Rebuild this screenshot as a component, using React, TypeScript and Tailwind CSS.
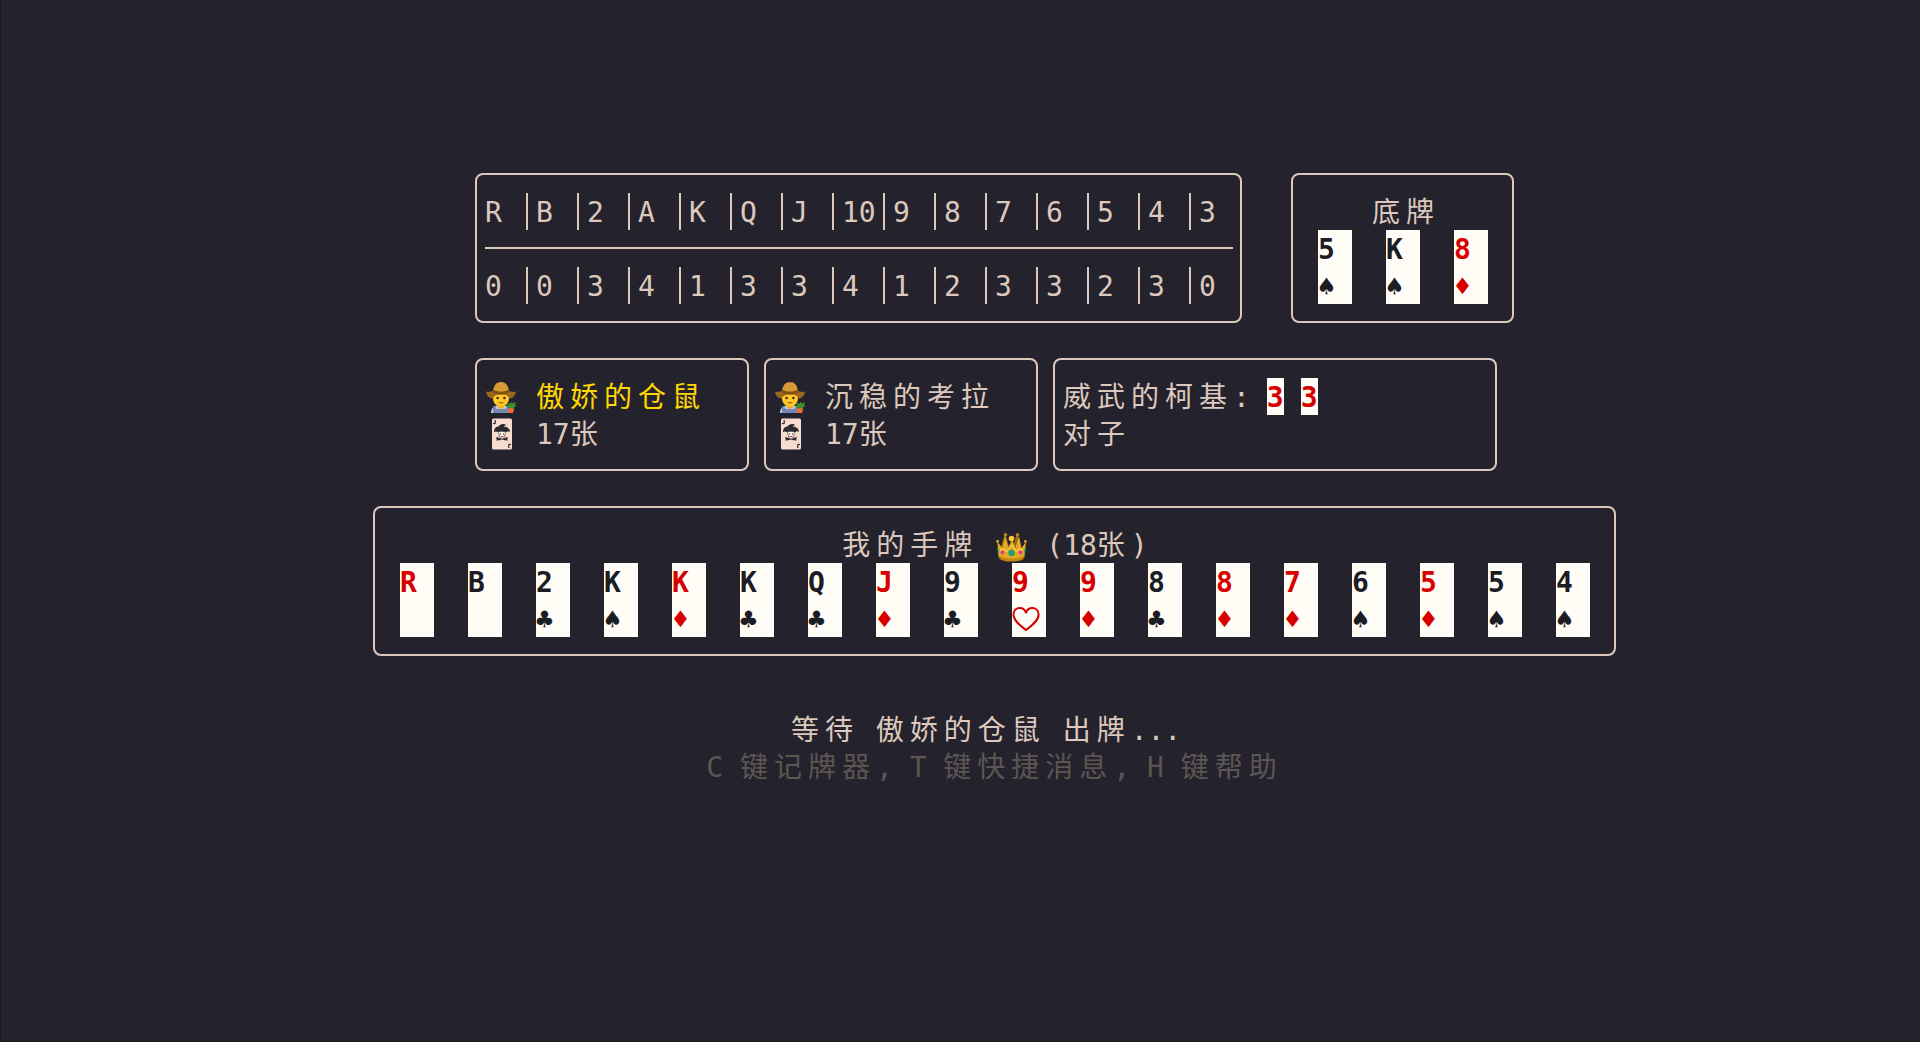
import React from 'react';

type Suit = '♠' | '♣' | '♦' | '♥' | '';
type CardData = { rank: string; suit: Suit; red?: boolean };

const counts = [
  { rank: 'R', left: 0 },
  { rank: 'B', left: 0 },
  { rank: '2', left: 3 },
  { rank: 'A', left: 4 },
  { rank: 'K', left: 1 },
  { rank: 'Q', left: 3 },
  { rank: 'J', left: 3 },
  { rank: '10', left: 4 },
  { rank: '9', left: 1 },
  { rank: '8', left: 2 },
  { rank: '7', left: 3 },
  { rank: '6', left: 3 },
  { rank: '5', left: 2 },
  { rank: '4', left: 3 },
  { rank: '3', left: 0 },
];

const bottomCards: CardData[] = [
  { rank: '5', suit: '♠' },
  { rank: 'K', suit: '♠' },
  { rank: '8', suit: '♦', red: true },
];

const hand: CardData[] = [
  { rank: 'R', suit: '', red: true },
  { rank: 'B', suit: '' },
  { rank: '2', suit: '♣' },
  { rank: 'K', suit: '♠' },
  { rank: 'K', suit: '♦', red: true },
  { rank: 'K', suit: '♣' },
  { rank: 'Q', suit: '♣' },
  { rank: 'J', suit: '♦', red: true },
  { rank: '9', suit: '♣' },
  { rank: '9', suit: '♥', red: true },
  { rank: '9', suit: '♦', red: true },
  { rank: '8', suit: '♣' },
  { rank: '8', suit: '♦', red: true },
  { rank: '7', suit: '♦', red: true },
  { rank: '6', suit: '♠' },
  { rank: '5', suit: '♦', red: true },
  { rank: '5', suit: '♠' },
  { rank: '4', suit: '♠' },
];

const isWide = (ch: string) => /[\u4e00-\u9fff]/.test(ch);

// Han characters take two terminal columns, everything else takes one
const Line: React.FC<{ text: string }> = ({ text }) => (
  <span className="whitespace-pre">
    {text.split(/([\u4e00-\u9fff])/).map((part, i) =>
      isWide(part) ? (
        <span key={i} className="inline-block w-[34px]">{part}</span>
      ) : (
        part
      )
    )}
  </span>
);

const Box: React.FC<{ className?: string; children: React.ReactNode }> = ({ className = '', children }) => (
  <section className={`rounded-lg border-2 border-[#dcc8bc] pt-[18px] pb-[17px] ${className}`}>{children}</section>
);

const HeartIcon: React.FC = () => (
  <svg viewBox="0 0 34 37" className="h-[37px] w-[34px]" role="img" aria-label="♥">
    <path
      d="M14 30C9 26 1.500 21 1.500 14.500C1.500 10.500 4.300 8 7.600 8C10.600 8 13 9.800 14 12.600C15 9.800 17.400 8 20.400 8C23.800 8 26.600 10.500 26.600 14.500C26.600 21 19 26 14 30Z"
      fill="none"
      stroke="currentColor"
      strokeWidth="2"
      strokeLinejoin="round"
    />
  </svg>
);

const Card: React.FC<{ card: CardData }> = ({ card }) => (
  <li className={`flex h-[74px] w-[34px] flex-col bg-[#fffdf5] ${card.red ? 'text-[#d70000]' : 'text-[#1c1c24]'}`}>
    <span className="h-[37px] font-bold">{card.rank}</span>
    <span className="h-[37px]">{card.suit === '♥' ? <HeartIcon /> : card.suit}</span>
  </li>
);

const FarmerIcon: React.FC = () => (
  <svg viewBox="0 0 32 32" className="h-8 w-8" role="img" aria-label="农民">
    <path d="M6 32c0-5 3-7 7-7.500h6c4 .5 7 2.500 7 7.500z" fill="#c3c9d6" />
    <path d="M10 25l1.500 3h9l1.500-3 2 .8V32H8v-6.200z" fill="#7388b4" />
    <path d="M13 22h6v4.500l-3 1.500-3-1.500z" fill="#f2a91e" />
    <path d="M8 12h16v5c0 5-3.500 8.500-8 8.500S8 22 8 17z" fill="#ffc928" />
    <path d="M8 12h16v3l-2.500-1.500h-11L8 16z" fill="#6b3f1d" />
    <circle cx="12.600" cy="17" r="1.300" fill="#3f2412" />
    <circle cx="19.400" cy="17" r="1.300" fill="#3f2412" />
    <path d="M14 21.800h4" stroke="#9b4a16" strokeWidth="1.100" fill="none" strokeLinecap="round" />
    <path d="M1 10.500c2 .8 5 .8 8-1.200h14c3 2 6 2 8 1.200-.5 4-3 6.800-6.500 7-1.500-3-4-4.500-8.500-4.500S9 14.500 7.500 17.500C4 17.300 1.500 14.500 1 10.500z" fill="#9a651c" />
    <path d="M8 11C8.500 4.500 11 2.500 13 1.500c2-.8 4-.8 6 0 2 1 4.500 3 5 9.500-4 2.300-12 2.300-16 0z" fill="#d99a35" />
    <path d="M8.200 8.800c4 2.400 11.600 2.400 15.600 0l.3 2.700c-4 2.300-12.200 2.300-16.200 0z" fill="#80500f" />
    <path d="M22.500 28l2-1.500 3.500.5 1 1.500-1 3.500h-4.500z" fill="#f06a35" />
    <path d="M22 25l2-3.500 1 1.500 2-2.500.5 2L31 21l-1 3 1.500 1-2.500 1 .5 3-2.500-2-4 .5z" fill="#3f8f2c" />
  </svg>
);

const JokerIcon: React.FC = () => (
  <svg viewBox="0 0 32 32" className="h-8 w-8" role="img" aria-label="牌数">
    <rect x="7" y=".5" width="20" height="31" rx="1.500" fill="#f6ddd0" />
    <path d="M10.200 2v3c0 1-1.700 1-1.700 0M23.800 30v-3c0-1 1.700-1 1.700 0" stroke="#27272b" strokeWidth="1.200" fill="none" />
    <path d="M13.500 13.500h7l-1 5.500-2.500 2-2.500-2z" fill="#fff4ec" stroke="#56504e" strokeWidth=".7" />
    <path d="M9 14.500c-.2-4 2-6 4.500-6C15 6 19 5 21.500 7.500c-1.500-.3-2.500.3-2.500 1.200 2.500-.2 6 1.300 6 5.300-1.200-1.200-2.500-1.200-3.500 .3-2.500-1.200-6.500-1.300-8.500 0-1.500-1-3-1-4 .2z" fill="#2b2b2f" />
    <path d="M15 16h1M18 16h1" stroke="#2b2b2f" strokeWidth="1.200" />
    <path d="M15 18h4l-2 1.600z" fill="#dd3f4c" />
    <path d="M11 19l3 .8 3 1.400 3-1.400 3-.8-.8 2.200 .8 1.300-3.500-.2L17 21.600l-2.500.7-3.500.2.8-1.300z" fill="#2b2b2f" />
  </svg>
);

const CrownIcon: React.FC = () => (
  <svg viewBox="0 0 32 32" className="mt-[5px] h-8 w-8" role="img" aria-label="地主">
    <path d="M10 2l4 13 2-2 2 2 4-13 4 14-2 6H8l-2-6z" fill="#9b6a12" />
    <path d="M2.500 11l5 6 2.500-12 3.500 12L17 8l3.500 9L24 5l2.500 12L31 11l-1.500 15c-5 4-21 4-26 0z" fill="#e3a924" />
    <path d="M4 25c6 3.400 19 3.400 25 0l-.5 3c-5 3.400-19 3.400-24 0z" fill="#c5860f" />
    <path d="M5 19l4-1 2.500 3 5-7 5 7 2.500-3 4 1" stroke="#ffd85a" strokeWidth="1" fill="none" />
    <circle cx="10.500" cy="3.800" r="1.800" fill="#b9851f" />
    <circle cx="22.500" cy="3.800" r="1.800" fill="#b9851f" />
    <circle cx="16.500" cy="7.500" r="2.800" fill="#ffca3a" />
    <circle cx="2.600" cy="10.500" r="1.400" fill="#e3a924" />
    <circle cx="30.400" cy="10.500" r="1.400" fill="#e3a924" />
    <circle cx="16.500" cy="22" r="3.200" fill="#1f9f69" />
    <circle cx="7.500" cy="21.500" r="1.900" fill="#dc3aa8" />
    <circle cx="25.500" cy="21.500" r="1.900" fill="#dc3aa8" />
    <path d="M2.300 16.500l1.700 2.500-.6 4-.8-1zM30.700 16.500l-1.700 2.500 .6 4 .8-1z" fill="#1f9f69" />
  </svg>
);

const Player: React.FC<{ name: string; cards: number; active?: boolean }> = ({ name, cards, active }) => (
  <Box className="w-[274px] pl-2">
    <div className="flex h-[37px] gap-[17px]">
      <span className="flex w-[34px] items-center"><FarmerIcon /></span>
      <h2 className={active ? 'text-[#ffd700]' : ''}><Line text={name} /></h2>
    </div>
    <div className="flex h-[37px] gap-[17px]">
      <span className="flex w-[34px] items-center"><JokerIcon /></span>
      <p><Line text={`${cards}张`} /></p>
    </div>
  </Box>
);

const CountTable: React.FC = () => (
  <table className="border-separate border-spacing-0 text-left">
    <thead>
      <tr>
        {counts.map(({ rank }, i) => (
          <th key={rank} scope="col" className="border-b-2 border-[#dcc8bc] p-0 pb-[17px] font-normal">
            <div className={i === 0 ? 'h-[37px] w-[41px]' : i === 14 ? 'h-[37px] w-11 border-l-2 border-[#dcc8bc] pl-2' : 'h-[37px] w-[51px] border-l-2 border-[#dcc8bc] pl-2'}>{rank}</div>
          </th>
        ))}
      </tr>
    </thead>
    <tbody>
      <tr>
        {counts.map(({ rank, left }, i) => (
          <td key={rank} className="p-0 pt-[18px]">
            <div className={i === 0 ? 'h-[37px]' : 'h-[37px] border-l-2 border-[#dcc8bc] pl-2'}>{left}</div>
          </td>
        ))}
      </tr>
    </tbody>
  </table>
);

const App: React.FC = () => {
  return (
    <main className="flex min-h-screen flex-col items-center border-b border-l border-[#191920] bg-[#24232d] pt-[173px] pl-[68px] font-['DejaVu_Sans_Mono','Noto_Sans_CJK_SC',monospace] text-[28px] leading-[39px] text-[#dcc8bc]">
      <div className="flex flex-col gap-[35px]">
        <div className="flex gap-[49px]">
          <Box className="pr-[7px] pl-2">
            <CountTable />
          </Box>
          <Box className="pr-6 pl-[25px]">
            <h2 className="h-[37px] text-center"><Line text="底牌" /></h2>
            <ul className="flex gap-[34px]">
              {bottomCards.map((card, i) => <Card key={i} card={card} />)}
            </ul>
          </Box>
        </div>
        <div className="flex gap-[15px]">
          <Player name="傲娇的仓鼠" cards={17} active />
          <Player name="沉稳的考拉" cards={17} />
          <Box className="w-[444px] pl-2">
            <div className="flex h-[37px] gap-[17px]">
              <h2><Line text="威武的柯基:" /></h2>
              <span className="w-[17px] bg-[#fffdf5] font-bold text-[#d70000]">3</span>
              <span className="w-[17px] bg-[#fffdf5] font-bold text-[#d70000]">3</span>
            </div>
            <p className="h-[37px]"><Line text="对子" /></p>
          </Box>
        </div>
      </div>
      <Box className="mt-[35px] pr-6 pl-[25px]">
        <h2 className="flex h-[37px] justify-center gap-[17px]">
          <Line text="我的手牌" />
          <span className="w-[34px]"><CrownIcon /></span>
          <Line text="(18张)" />
        </h2>
        <ul className="flex gap-[34px]">
          {hand.map((card, i) => <Card key={i} card={card} />)}
        </ul>
      </Box>
      <p className="mt-[55px] h-[37px]"><Line text="等待 傲娇的仓鼠 出牌... " /></p>
      <p className="h-[37px] text-[#5d5552]"><Line text="C 键记牌器, T 键快捷消息, H 键帮助" /></p>
    </main>
  );
};

export default App;
